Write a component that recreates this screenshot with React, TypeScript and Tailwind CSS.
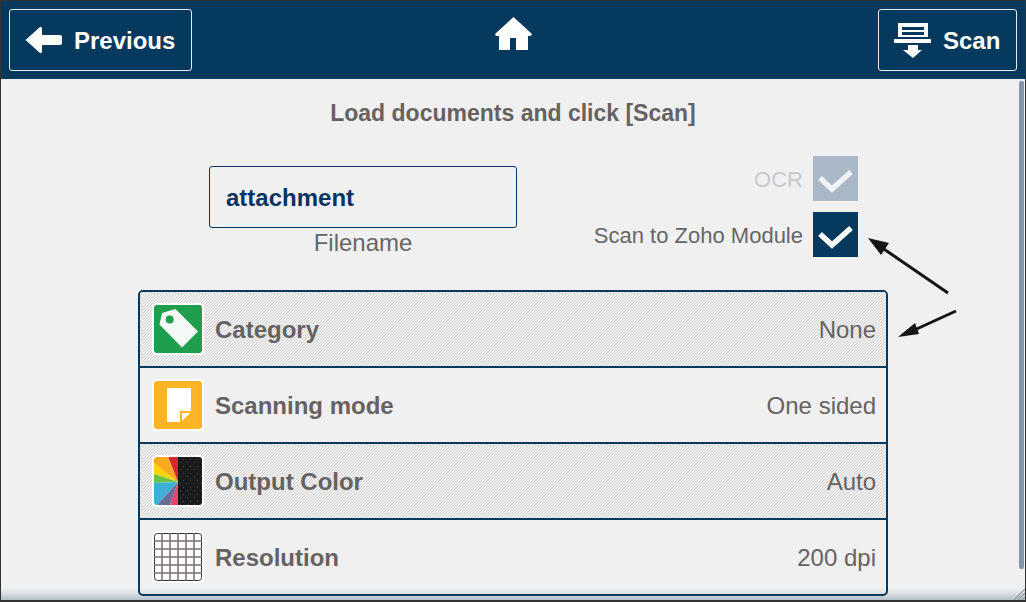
import React from 'react';

const sans = 'font-["Liberation_Sans",Arial,sans-serif]';

const Check: React.FC<{ muted?: boolean }> = ({ muted }) => (
  <svg width="45" height="45" viewBox="0 0 45 45">
    <path d="M7 22 L19 33 L38 16" fill="none" stroke={muted ? '#f0f2f4' : '#ffffff'} strokeWidth="5.5" />
  </svg>
);

const TagIcon = () => (
  <svg viewBox="0 0 48 48" className="w-full h-full">
    <rect width="48" height="48" rx="3" fill="#1f9e4d" />
    <path d="M5.5 19.5 L8 8 L21.5 4 L44 26.5 L28 42.5 Z" fill="#f6faf6" />
    <circle cx="15.7" cy="14.4" r="4" fill="#1f9e4d" />
  </svg>
);

const PageIcon = () => (
  <svg viewBox="0 0 48 48" className="w-full h-full">
    <rect width="48" height="48" rx="3" fill="#fdb526" />
    <path d="M13 7 H37 V30 H26 V41 H13 Z" fill="#ffffff" />
    <path d="M28 32 H36 L28 40 Z" fill="#ffffff" />
  </svg>
);

const ColorIcon = () => (
  <svg viewBox="0 0 48 48" className="w-full h-full">
    <defs>
      <clipPath id="colorClip">
        <rect width="48" height="48" rx="3" />
      </clipPath>
      <pattern id="dots" width="7" height="7" patternUnits="userSpaceOnUse">
        <rect x="1" y="2" width="1" height="1" fill="#4a4a4a" />
        <rect x="5" y="5" width="1" height="1" fill="#3d3d3d" />
      </pattern>
    </defs>
    <g clipPath="url(#colorClip)">
      <rect x="24" width="24" height="48" fill="#1b1b1d" />
      <rect x="24" width="24" height="48" fill="url(#dots)" />
      <path d="M24 25 L14 0 H24 Z" fill="#d5272f" />
      <path d="M24 25 L0 6 V0 H14 Z" fill="#fbaa1f" />
      <path d="M24 25 L0 6 V17 Z" fill="#fad40c" />
      <path d="M24 25 L0 17 V26 Z" fill="#6cc04d" />
      <path d="M24 25 L0 26 V48 H3 Z" fill="#3eb0d8" />
      <path d="M24 25 L3 48 H16 Z" fill="#6a6b9b" />
      <path d="M24 25 L16 48 H24 Z" fill="#e5446d" />
    </g>
  </svg>
);

const GridIcon = () => (
  <svg viewBox="0 0 48 48" className="w-full h-full">
    <rect x="0.5" y="0.5" width="47" height="47" rx="3" fill="#ffffff" stroke="#333333" />
    {[8, 16, 24, 32, 40].map((p) => (
      <React.Fragment key={p}>
        <line x1={p} y1="0" x2={p} y2="48" stroke="#77706f" strokeWidth="1.5" />
        <line x1="0" y1={p} x2="48" y2={p} stroke="#77706f" strokeWidth="1.5" />
      </React.Fragment>
    ))}
  </svg>
);

const rows = [
  { label: 'Category', value: 'None', icon: <TagIcon />, hatch: true },
  { label: 'Scanning mode', value: 'One sided', icon: <PageIcon />, hatch: false },
  { label: 'Output Color', value: 'Auto', icon: <ColorIcon />, hatch: true },
  { label: 'Resolution', value: '200 dpi', icon: <GridIcon />, hatch: false },
];

const App: React.FC = () => {
  return (
    <div className={`relative w-[1026px] h-[602px] overflow-hidden bg-[#f0f0f0] border border-[#333333] border-b-2 ${sans}`}>
      {/* bottom fade, sits behind the list */}
      <div className="absolute left-0 right-0 bottom-0 h-[12px] bg-linear-to-b from-[#f0f0f000] via-[#dfe2e5] via-40% to-[#b4bec8]" />

      <header className="relative h-[78px] bg-[#06395e] flex items-center pl-2 pr-2">
        <button className="w-[183px] h-[62px] shrink-0 border border-[#e4edf5] rounded-[3px] flex items-center pl-[15px] gap-[12px] text-white font-bold text-2xl">
          <svg width="37" height="28" viewBox="0 0 37 28">
            <path d="M0.5 14 L15 1 Q17 0 17 3 V9 H35 Q37 9 37 11 V17 Q37 19 35 19 H17 V25 Q17 28 15 27 Z" fill="#ffffff" />
          </svg>
          <span className="mt-[2px]">Previous</span>
        </button>
        <div className="flex-1 flex justify-center pr-[44px] pb-[14px]">
          <svg width="37" height="33" viewBox="0 0 37 33">
            <path d="M18.5 0 L37 17 L36 19 H33 V33 H21 V21 H15 V33 H4 V19 H1 L0 17 Z" fill="#ffffff" />
          </svg>
        </div>
        <button className="w-[139px] h-[62px] shrink-0 border border-[#e4edf5] rounded-[3px] flex items-center pl-[15px] gap-3 text-white font-bold text-2xl">
          <svg width="37" height="38" viewBox="0 0 37 38">
            <path d="M4 2 H34 V16 H4 Z M8 6 V9 H30 V6 Z M8 11 V14 H30 V11 Z" fill="#ffffff" fillRule="evenodd" />
            <rect x="0" y="18" width="37" height="4" fill="#ffffff" />
            <path d="M14 24 H24 V29 H28 L19 37 L9 29 H14 Z" fill="#ffffff" />
          </svg>
          <span className="mt-[2px]">Scan</span>
        </button>
      </header>

      <main className="relative">
        <h1 className="pt-[21px] text-center font-bold text-[#666262] text-[23px] leading-[26px]">
          Load documents and click [Scan]
        </h1>

        <div className="flex mt-[28px] h-[136px]">
          <div className="ml-[208px] w-[308px] pt-[12px]">
            <div className="h-[62px] border border-[#0a3360] rounded-[3px] flex items-center pl-4 font-bold text-2xl text-[#0a3360]">
              <span className="mt-[1px]">attachment</span>
            </div>
            <div className="text-center text-2xl leading-[30px] text-[#666666]">Filename</div>
          </div>
          <div className="ml-[296px] w-[45px] flex flex-col gap-[11px] pt-[2px]">
            <div className="relative w-[45px] h-[45px] bg-[#a9b8c6]">
              <Check muted />
              <span className="absolute right-[55px] top-[9px] text-[22px] leading-[30px] text-[#c6cacd] whitespace-nowrap">OCR</span>
            </div>
            <div className="relative w-[45px] h-[45px] bg-[#06395e]">
              <Check />
              <span className="absolute right-[55px] top-[9px] text-[22px] leading-[30px] text-[#666666] whitespace-nowrap">Scan to Zoho Module</span>
            </div>
          </div>
        </div>

        <div className="ml-[137px] w-[750px] border-2 border-[#06395e] rounded-[5px] overflow-hidden">
          {rows.map((row, i) => (
            <div
              key={row.label}
              className={`flex items-center pl-[12px] pr-[10px] ${i < rows.length - 1 ? 'h-[76px] border-b-2 border-[#06395e]' : 'h-[74px]'} ${row.hatch ? 'bg-[repeating-linear-gradient(135deg,#d0d0d0_0,#d0d0d0_0.7px,#f2f2f2_0.7px,#f2f2f2_2.12px)]' : ''}`}
            >
              <div className="w-[52px] h-[52px] shrink-0 bg-white rounded-[4px] p-[2px]">{row.icon}</div>
              <span className="ml-[11px] mt-[2px] font-bold text-2xl text-[#666262]">{row.label}</span>
              <span className="ml-auto mt-[2px] text-2xl text-[#666262]">{row.value}</span>
            </div>
          ))}
        </div>
      </main>

      {/* scrollbar */}
      <div className="absolute right-[1px] top-[80px] w-[5px] h-[488px] rounded-[2px] bg-[#8496ab]" />
      {/* resize grip */}
      <svg className="absolute right-0 bottom-0" width="12" height="12" viewBox="0 0 12 12">
        <path d="M1 12 L12 1 M5 12 L12 5 M9 12 L12 9" stroke="#8f979f" strokeWidth="1.2" />
      </svg>
      {/* callout arrows */}
      <svg className="absolute left-[-1px] top-[-1px] pointer-events-none" width="1026" height="602">
        <path d="M948 293 L878 245" stroke="#141414" strokeWidth="3" />
        <path d="M868 238 L889 243 L881 255 Z" fill="#141414" />
        <path d="M956 311 L910 332" stroke="#141414" strokeWidth="3" />
        <path d="M898 337 L915 323 L919 334 Z" fill="#141414" />
      </svg>
    </div>
  );
};

export default App;
